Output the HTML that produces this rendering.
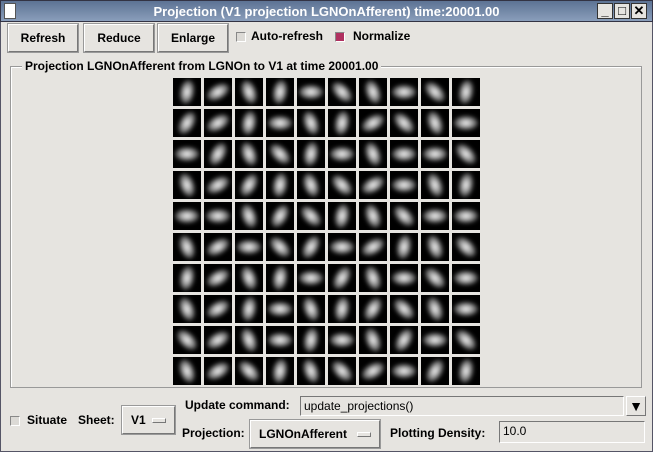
<!DOCTYPE html>
<html><head><style>
*{box-sizing:border-box;margin:0;padding:0}
body{width:653px;height:452px;background:#e6e4e0;font-family:"Liberation Sans",sans-serif;font-size:12px;font-weight:bold;position:relative;overflow:hidden;color:#000}
.abs{position:absolute}
#title{left:0;top:0;width:653px;height:22px;background:linear-gradient(#5d7394,#8a9ebb);color:#fff;text-align:center;line-height:22px;font-size:13px;border:1px solid #334}
.wb{top:3px;width:16px;height:16px;background:#e6e4e0;border:1px solid #333;font-size:13px;color:#000;line-height:14px;text-align:center}
.btn{top:24px;height:28px;background:#e6e4e0;border:1px solid;border-color:#fff #777 #777 #fff;box-shadow:0 0 0 1px #999;text-align:center;line-height:26px}
.cb{width:10px;height:10px;border:1px solid;border-color:#888 #fff #fff #888;background:#dcdad6}
#frame{left:10px;top:66px;width:632px;height:322px;border:1px solid #999;box-shadow:inset 1px 1px 0 #fff}
#grid{left:173px;top:78px;width:310px;height:310px;display:grid;grid-template-columns:repeat(10,28px);grid-auto-rows:28px;gap:3px}
.c{background:#000;overflow:hidden;position:relative}
.c i{position:absolute;left:2px;top:7px;width:24px;height:14px;border-radius:50%;background:radial-gradient(ellipse,#fff 0%,#bbb 30%,#555 65%,#111 100%);filter:blur(2px)}
.c:nth-child(3n) i{transform:rotate(45deg)}
.c:nth-child(3n+1) i{transform:rotate(100deg)}
.c:nth-child(5n+2) i{transform:rotate(-30deg)}
.c:nth-child(7n) i{transform:rotate(0deg)}
.c:nth-child(4n+3) i{transform:rotate(70deg)}
.c:nth-child(11n) i{transform:rotate(-60deg)}
.inp{background:#e6e4e0;border:1px solid;border-color:#777 #fff #fff #777;font-weight:normal;line-height:18px;padding-left:3px}
.mb{background:#e6e4e0;border:1px solid;border-color:#fff #777 #777 #fff;box-shadow:0 0 0 1px #999;line-height:26px;padding-left:8px}
.mb b{position:absolute;right:8px;top:11px;width:14px;height:5px;border:1px solid;border-color:#fff #777 #777 #fff}
</style></head><body>
<div class="abs" style="left:0;top:0;width:653px;height:452px;border:1px solid #556"></div>
<div id="title" class="abs">Projection (V1 projection LGNOnAfferent) time:20001.00</div>
<div class="abs" style="left:4px;top:3px;width:12px;height:16px;background:#fff;border:1px solid #555"></div>
<div class="abs wb" style="left:597px">_</div>
<div class="abs wb" style="left:614px">□</div>
<div class="abs wb" style="left:631px">✕</div>
<div class="abs btn" style="left:8px;width:70px">Refresh</div>
<div class="abs btn" style="left:84px;width:70px">Reduce</div>
<div class="abs btn" style="left:158px;width:70px">Enlarge</div>
<div class="abs cb" style="left:236px;top:32px"></div>
<div class="abs" style="left:251px;top:29px">Auto-refresh</div>
<div class="abs cb" style="left:335px;top:32px;background:#b03060"></div>
<div class="abs" style="left:353px;top:29px">Normalize</div>
<div id="frame" class="abs"></div>
<div class="abs" style="left:22px;top:59px;background:#e6e4e0;padding:0 3px">Projection LGNOnAfferent from LGNOn to V1 at time 20001.00</div>
<div id="grid" class="abs">
<div class="c"><i></i></div><div class="c"><i></i></div><div class="c"><i></i></div><div class="c"><i></i></div><div class="c"><i></i></div><div class="c"><i></i></div><div class="c"><i></i></div><div class="c"><i></i></div><div class="c"><i></i></div><div class="c"><i></i></div>
<div class="c"><i></i></div><div class="c"><i></i></div><div class="c"><i></i></div><div class="c"><i></i></div><div class="c"><i></i></div><div class="c"><i></i></div><div class="c"><i></i></div><div class="c"><i></i></div><div class="c"><i></i></div><div class="c"><i></i></div>
<div class="c"><i></i></div><div class="c"><i></i></div><div class="c"><i></i></div><div class="c"><i></i></div><div class="c"><i></i></div><div class="c"><i></i></div><div class="c"><i></i></div><div class="c"><i></i></div><div class="c"><i></i></div><div class="c"><i></i></div>
<div class="c"><i></i></div><div class="c"><i></i></div><div class="c"><i></i></div><div class="c"><i></i></div><div class="c"><i></i></div><div class="c"><i></i></div><div class="c"><i></i></div><div class="c"><i></i></div><div class="c"><i></i></div><div class="c"><i></i></div>
<div class="c"><i></i></div><div class="c"><i></i></div><div class="c"><i></i></div><div class="c"><i></i></div><div class="c"><i></i></div><div class="c"><i></i></div><div class="c"><i></i></div><div class="c"><i></i></div><div class="c"><i></i></div><div class="c"><i></i></div>
<div class="c"><i></i></div><div class="c"><i></i></div><div class="c"><i></i></div><div class="c"><i></i></div><div class="c"><i></i></div><div class="c"><i></i></div><div class="c"><i></i></div><div class="c"><i></i></div><div class="c"><i></i></div><div class="c"><i></i></div>
<div class="c"><i></i></div><div class="c"><i></i></div><div class="c"><i></i></div><div class="c"><i></i></div><div class="c"><i></i></div><div class="c"><i></i></div><div class="c"><i></i></div><div class="c"><i></i></div><div class="c"><i></i></div><div class="c"><i></i></div>
<div class="c"><i></i></div><div class="c"><i></i></div><div class="c"><i></i></div><div class="c"><i></i></div><div class="c"><i></i></div><div class="c"><i></i></div><div class="c"><i></i></div><div class="c"><i></i></div><div class="c"><i></i></div><div class="c"><i></i></div>
<div class="c"><i></i></div><div class="c"><i></i></div><div class="c"><i></i></div><div class="c"><i></i></div><div class="c"><i></i></div><div class="c"><i></i></div><div class="c"><i></i></div><div class="c"><i></i></div><div class="c"><i></i></div><div class="c"><i></i></div>
<div class="c"><i></i></div><div class="c"><i></i></div><div class="c"><i></i></div><div class="c"><i></i></div><div class="c"><i></i></div><div class="c"><i></i></div><div class="c"><i></i></div><div class="c"><i></i></div><div class="c"><i></i></div><div class="c"><i></i></div>
</div>
<div class="abs" style="left:185px;top:398px">Update command:</div>
<div class="abs inp" style="left:300px;top:396px;width:324px;height:20px">update_projections()</div>
<div class="abs" style="left:626px;top:396px;width:20px;height:20px;border:1px solid;border-color:#fff #777 #777 #fff;text-align:center;line-height:18px;font-size:14px">▼</div>
<div class="abs cb" style="left:10px;top:416px"></div>
<div class="abs" style="left:27px;top:413px">Situate</div>
<div class="abs" style="left:78px;top:413px">Sheet:</div>
<div class="abs mb" style="left:122px;top:406px;width:53px;height:28px">V1<b></b></div>
<div class="abs" style="left:182px;top:426px">Projection:</div>
<div class="abs mb" style="left:250px;top:420px;width:130px;height:28px">LGNOnAfferent<b></b></div>
<div class="abs" style="left:390px;top:426px">Plotting Density:</div>
<div class="abs inp" style="left:499px;top:421px;width:146px;height:22px">10.0</div>
</body></html>
